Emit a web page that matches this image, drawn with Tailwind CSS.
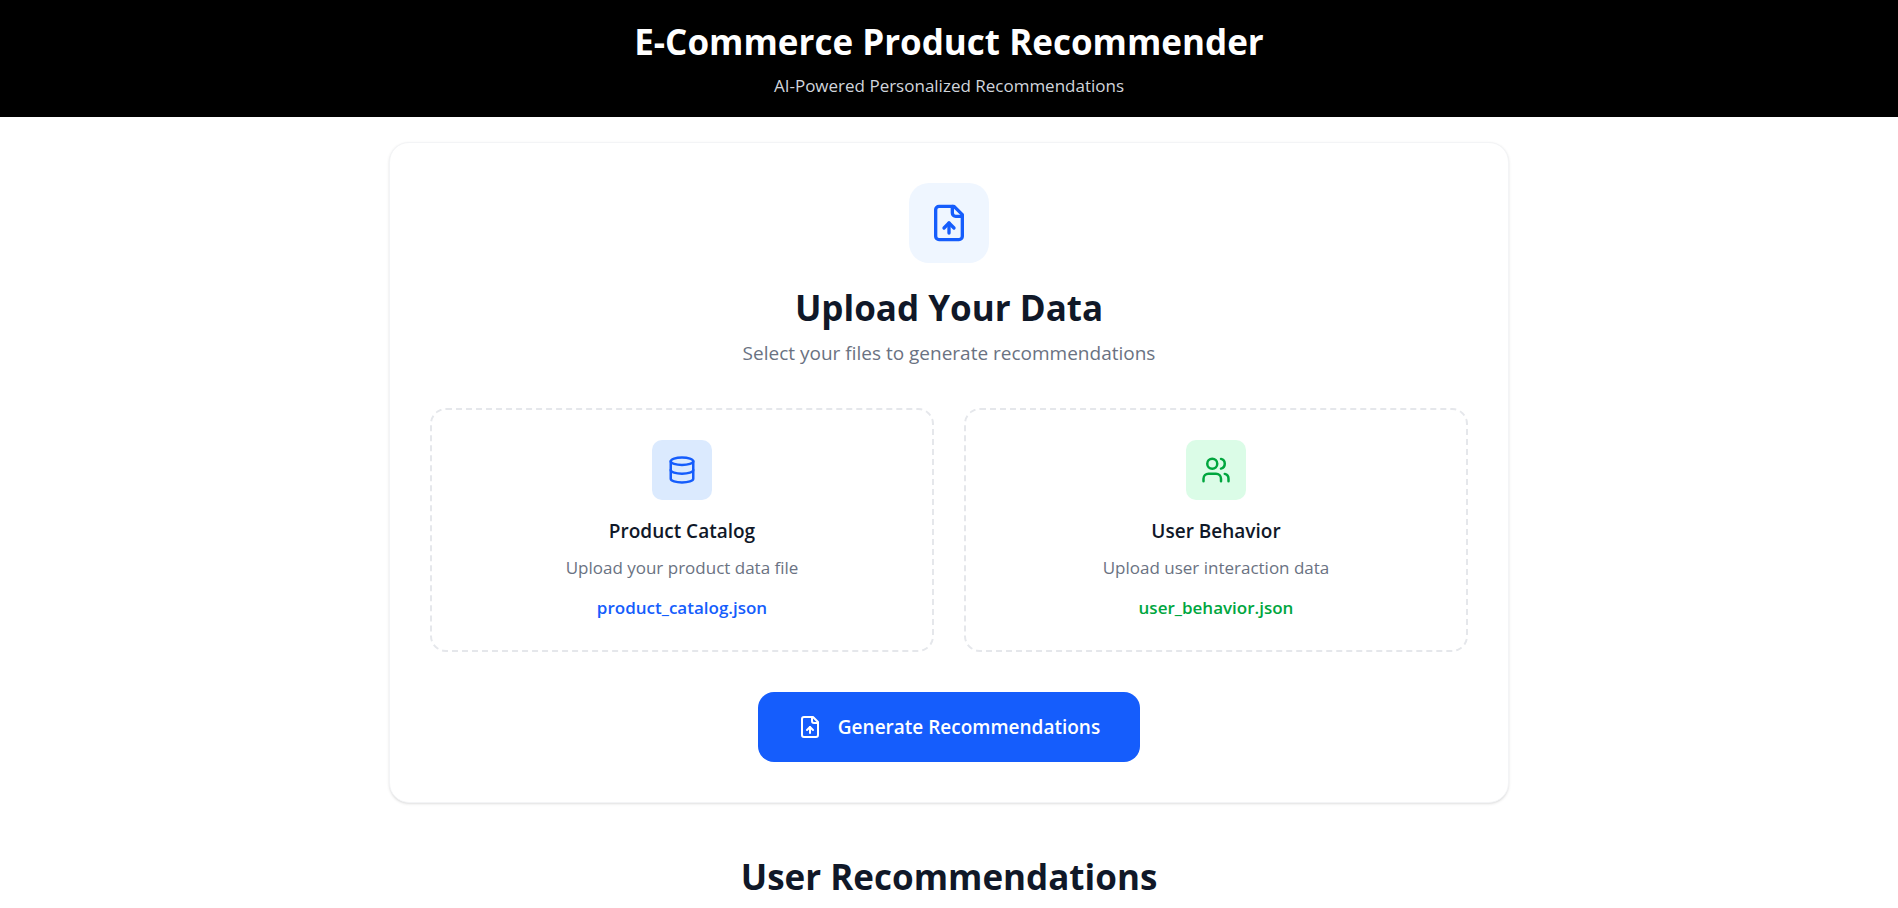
<!DOCTYPE html>
<html lang="en">
<head>
<meta charset="utf-8">
<meta name="viewport" content="width=device-width, initial-scale=1">
<title>E-Commerce Product Recommender</title>
<script src="https://cdn.jsdelivr.net/npm/@tailwindcss/browser@4"></script>
</head>
<body class="min-h-screen overflow-x-hidden bg-white font-['Open_Sans','Noto_Sans',sans-serif] text-center text-gray-900">
<header class="bg-black px-6 pt-4 pb-[19px] text-white">
  <h1 class="text-[35px] leading-[52px] font-bold">E-Commerce Product Recommender</h1>
  <p class="mt-[5px] text-[17px] leading-[25px] text-gray-300">AI-Powered Personalized Recommendations</p>
</header>
<main class="mx-auto max-w-[1120px] pt-[25px]">
  <section class="flex flex-col items-center rounded-[20px] border border-gray-100 bg-white p-10 shadow-sm">
    <div class="flex size-20 items-center justify-center rounded-[20px] bg-blue-50 text-[#155dfc]">
      <svg class="size-10" viewBox="0 0 24 24" fill="none" stroke="currentColor" stroke-width="2" stroke-linecap="round" stroke-linejoin="round" aria-hidden="true"><path d="M15 2H6a2 2 0 0 0-2 2v16a2 2 0 0 0 2 2h12a2 2 0 0 0 2-2V7Z"/><path d="M14 2v4a2 2 0 0 0 2 2h4"/><path d="M12 12v6"/><path d="m15 15-3-3-3 3"/></svg>
    </div>
    <h2 class="mt-5 text-[35px] leading-[50px] font-bold">Upload Your Data</h2>
    <p class="mt-1.5 text-[19px] leading-[29px] text-gray-500">Select your files to generate recommendations</p>
    <div class="mt-10 grid w-full gap-[30px] md:grid-cols-2">
      <label class="relative flex cursor-pointer flex-col items-center rounded-2xl border-2 border-dashed border-gray-200 px-[30px] pt-[30px] pb-7">
        <input type="file" accept=".json" class="sr-only">
        <span class="flex size-[60px] items-center justify-center rounded-[10px] bg-blue-100 text-[#155dfc]">
          <svg class="size-[30px]" viewBox="0 0 24 24" fill="none" stroke="currentColor" stroke-width="2" stroke-linecap="round" stroke-linejoin="round" aria-hidden="true"><ellipse cx="12" cy="5" rx="9" ry="3"/><path d="M3 5V19A9 3 0 0 0 21 19V5"/><path d="M3 12A9 3 0 0 0 21 12"/></svg>
        </span>
        <span class="mt-4 text-[19px] leading-[30px] font-semibold">Product Catalog</span>
        <span class="mt-2 text-[17px] leading-[28px] text-gray-500">Upload your product data file</span>
        <span class="mt-3 text-[17px] leading-[28px] font-semibold text-[#155dfc]">product_catalog.json</span>
      </label>
      <label class="relative flex cursor-pointer flex-col items-center rounded-2xl border-2 border-dashed border-gray-200 px-[30px] pt-[30px] pb-7">
        <input type="file" accept=".json" class="sr-only">
        <span class="flex size-[60px] items-center justify-center rounded-[10px] bg-green-100 text-[#00a63e]">
          <svg class="size-[30px]" viewBox="0 0 24 24" fill="none" stroke="currentColor" stroke-width="2" stroke-linecap="round" stroke-linejoin="round" aria-hidden="true"><path d="M16 21v-2a4 4 0 0 0-4-4H6a4 4 0 0 0-4 4v2"/><circle cx="9" cy="7" r="4"/><path d="M22 21v-2a4 4 0 0 0-3-3.87"/><path d="M16 3.13a4 4 0 0 1 0 7.75"/></svg>
        </span>
        <span class="mt-4 text-[19px] leading-[30px] font-semibold">User Behavior</span>
        <span class="mt-2 text-[17px] leading-[28px] text-gray-500">Upload user interaction data</span>
        <span class="mt-3 text-[17px] leading-[28px] font-semibold text-[#00a63e]">user_behavior.json</span>
      </label>
    </div>
    <button type="button" class="mt-10 flex cursor-pointer items-center gap-4 rounded-2xl bg-[#155dfc] px-10 py-5 text-[19px] leading-[30px] font-semibold text-white">
      <svg class="size-6" viewBox="0 0 24 24" fill="none" stroke="currentColor" stroke-width="2" stroke-linecap="round" stroke-linejoin="round" aria-hidden="true"><path d="M15 2H6a2 2 0 0 0-2 2v16a2 2 0 0 0 2 2h12a2 2 0 0 0 2-2V7Z"/><path d="M14 2v4a2 2 0 0 0 2 2h4"/><path d="M12 12v6"/><path d="m15 15-3-3-3 3"/></svg>
      Generate Recommendations
    </button>
  </section>
  <section class="pt-12">
    <h2 class="text-[35px] leading-[52px] font-bold">User Recommendations</h2>
  </section>
</main>
</body>
</html>
